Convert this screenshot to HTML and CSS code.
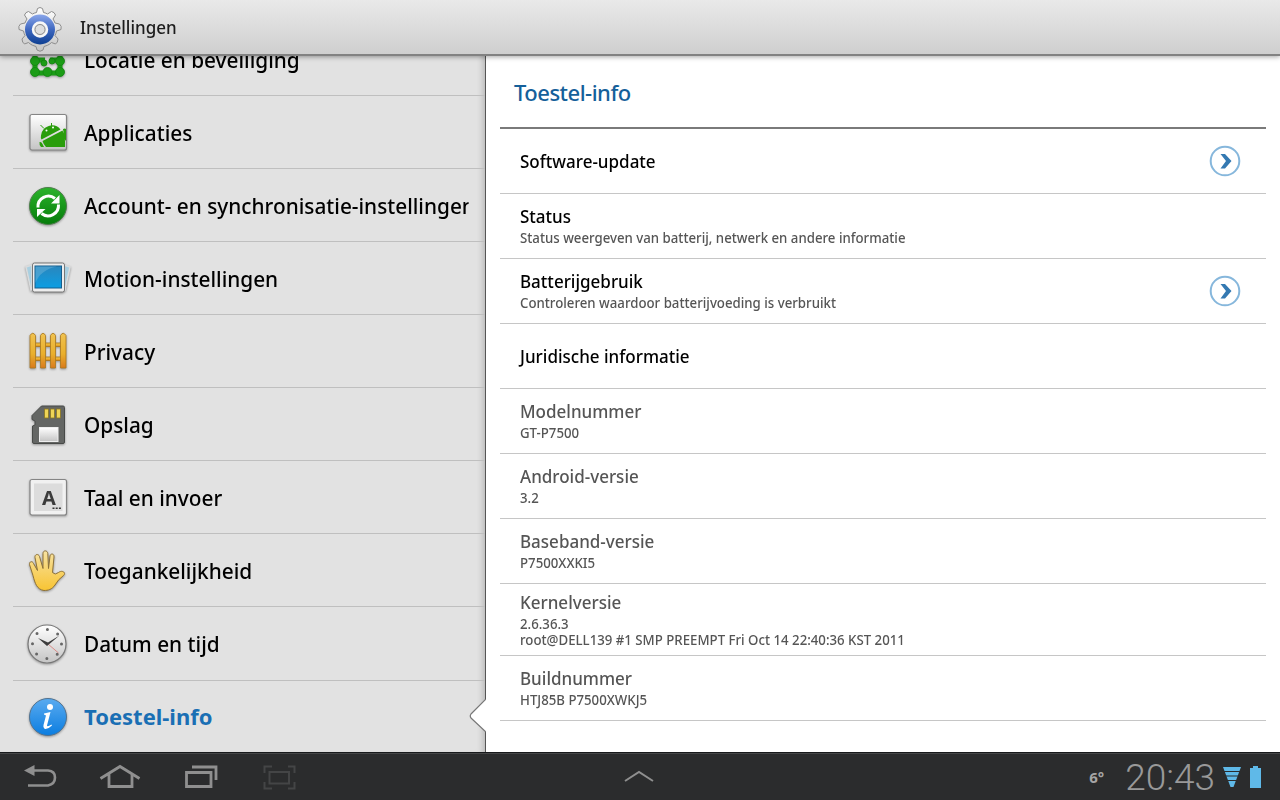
FILE: index.html
```html
<!DOCTYPE html>
<html lang="nl">
<head>
  <meta charset="utf-8">
  <title>Instellingen</title>
  <link rel="stylesheet" href="styles.css">
</head>
<body>
  <header class="topbar">
    <svg class="gear" width="48" height="48" viewBox="0 0 48 48">
      <defs>
        <linearGradient id="blue" x1="0" y1="0" x2="0" y2="1"><stop offset="0" stop-color="#8aa6ea"/><stop offset=".5" stop-color="#3f68c0"/><stop offset="1" stop-color="#0d3f92"/></linearGradient>
        <linearGradient id="silver" x1="0" y1="0" x2="0" y2="1"><stop offset="0" stop-color="#fff"/><stop offset="1" stop-color="#c4c4c4"/></linearGradient>
      </defs>
      <g fill="url(#silver)" stroke="#8d8d8d" stroke-width="1">
        <path d="M20.500 7.500 21.500 3.500Q24 1.500 26.500 3.500L27.500 7.500Q30 8 31.500 9L35.500 6.500Q38.500 7 39.500 10L37 14Q38.300 16 39 18L43.500 19Q46 21 45 24.500L40.500 26Q40 28.500 39 30.500L42 34Q42 37.500 39.500 39L35.500 37.500Q33.500 39.500 31.500 40.300L28 41.500 27 45Q24 47.500 21 45L20 41.500 16.500 40.300Q14.500 39.500 12.500 37.500L8.500 39Q6 37.500 6 34L9 30.500Q8 28.500 7.500 26L3 24.500Q2 21 4.500 19L9 18Q9.700 16 11 14L8.500 10Q9.500 7 12.500 6.500L16.500 9Q18 8 20.500 7.500Z"/>
      </g>
      <circle cx="24" cy="24.500" r="15" fill="url(#blue)"/>
      <circle cx="24" cy="24.500" r="7" fill="#d4d6da" stroke="#f7f7f7" stroke-width="2.500"/>
      <circle cx="24" cy="24.500" r="5" fill="#dedede" stroke="#8f8f8f"/>
    </svg>
    <span class="app-title">Instellingen</span>
  </header>

  <main>
    <nav class="side">
      <ul>
        <li>
          <svg class="icon" viewBox="0 0 48 48">
            <g fill="none" stroke="#1c9c17" stroke-width="5">
              <path d="M11 10v28M36 10v28M11 37h25M11 24h10M26 24h10"/>
            </g>
            <g fill="#1c9c17" stroke="#128510" stroke-width=".8">
              <circle cx="11" cy="25" r="4.500"/><circle cx="20" cy="27" r="3"/><circle cx="28" cy="25" r="3"/><circle cx="36" cy="25" r="4.500"/>
              <circle cx="11" cy="36" r="4.500"/><circle cx="23.500" cy="36" r="4.500"/><circle cx="36" cy="36" r="4.500"/>
            </g>
          </svg>
          <span class="label">Locatie en beveiliging</span>
        </li>
        <li>
          <svg class="icon" viewBox="0 0 48 48">
            <rect x="6" y="5.500" width="36.500" height="35.500" rx="2" fill="url(#silver)" stroke="#858585" stroke-width="1.200"/>
            <path d="M17 27.500A11 11 0 0 1 36.500 21.500L17.500 31.500Q16.500 29.500 17 27.500ZM18.500 33 38.500 22.500Q41 27 41 33V39H22Q19.500 36.500 18.500 33ZM15.500 34Q17.500 33.500 18.500 36L20 39H17Q15 36.500 15.500 34ZM39 21Q41 20 42 21V33Q40 31 40 28Z" transform="translate(0 -1)" fill="#2a9d0c"/>
            <path d="M16.500 16 20 19.500M27.500 14V17" stroke="#2a9d0c"/>
            <circle cx="22.500" cy="21.500" r="1" fill="#fff"/><circle cx="29" cy="18.500" r="1" fill="#fff"/>
          </svg>
          <span class="label">Applicaties</span>
        </li>
        <li>
          <svg class="icon" viewBox="0 0 48 48">
            <defs><linearGradient id="green" x1="0" y1="0" x2="0" y2="1"><stop offset="0" stop-color="#2bb32b"/><stop offset="1" stop-color="#067c0b"/></linearGradient></defs>
            <circle cx="24" cy="24" r="18.500" fill="url(#green)" stroke="#4c7d4a"/>
            <g fill="none" stroke="#fff" stroke-width="3">
              <path d="M14 25.500A10.500 10.500 0 0 1 31 16.500M34.500 22.500A10.500 10.500 0 0 1 17.500 31.500"/>
            </g>
            <path d="M35.500 13V21.500H27ZM13 35V27H21.500Z" fill="#fff"/>
          </svg>
          <span class="label">Account- en synchronisatie-instellingen</span>
        </li>
        <li>
          <svg class="icon" viewBox="0 0 48 48">
            <defs><linearGradient id="sky" x1="0" y1="0" x2="0" y2="1"><stop offset="0" stop-color="#2a86bd"/><stop offset="1" stop-color="#0c9ee3"/></linearGradient></defs>
            <g fill="#a9cfe0" stroke="#d9dbdc" stroke-width="1.500">
              <path d="M2 12 8 10V34L7 35ZM46 12 40 10V34L41 35Z"/>
            </g>
            <rect x="8.500" y="8" width="32" height="29" rx="2" fill="#ededed" stroke="#777"/>
            <rect x="11" y="11" width="26.500" height="22" fill="url(#sky)" stroke="#155f8d"/>
            <path d="M11.500 28Q16 15 33 11.500H11.500Z" fill="#62aed6" opacity=".6"/>
          </svg>
          <span class="label">Motion-instellingen</span>
        </li>
        <li>
          <svg class="icon" viewBox="0 0 48 48">
            <defs><linearGradient id="wood" x1="0" y1="0" x2="0" y2="1"><stop offset="0" stop-color="#f0c250"/><stop offset=".6" stop-color="#e9af2c"/><stop offset="1" stop-color="#d97a1c"/></linearGradient></defs>
            <g fill="url(#wood)" stroke="#a9771d" stroke-width=".8" transform="translate(0 -1)">
              <rect x="8" y="16" width="33" height="3.500"/><rect x="8" y="30" width="33" height="3.500"/>
              <path d="M6 41V8.500Q8.800 4 11.500 8.500V41ZM16.500 41V8.500Q19 4 21.500 8.500V41ZM26.500 41V8.500Q29 4 31.500 8.500V41ZM36.500 41V8.500Q39 4 42 8.500V41Z"/>
            </g>
          </svg>
          <span class="label">Privacy</span>
        </li>
        <li>
          <svg class="icon" viewBox="0 0 48 48">
            <path d="M17.500 5H39Q40.500 5 40.500 6.500V41Q40.500 42.500 39 42.500H10Q8.500 42.500 8.500 41V25L11 24V20L8 18.500V14.500Z" fill="#646664" stroke="#484a48"/>
            <g fill="#efd456" stroke="#8b7622" stroke-width=".8"><rect x="20.500" y="8" width="4" height="9"/><rect x="26.500" y="8" width="4" height="9"/><rect x="32.500" y="8" width="4" height="9"/></g>
            <rect x="15.500" y="26.500" width="18.500" height="14" fill="url(#silver)" stroke="#eee"/>
          </svg>
          <span class="label">Opslag</span>
        </li>
        <li>
          <svg class="icon" viewBox="0 0 48 48">
            <rect x="6" y="5.500" width="36.500" height="35.500" rx="2" fill="#f1f1f1" stroke="#858585" stroke-width="1.200"/>
            <rect x="10" y="9.500" width="28.500" height="27.500" fill="#dcdcdc"/>
            <text class="key" x="25" y="31" text-anchor="middle">A</text>
            <path d="M28.500 34.200h8.500" stroke="#333" stroke-width="1.500" stroke-dasharray="2 1.200"/>
          </svg>
          <span class="label">Taal en invoer</span>
        </li>
        <li>
          <svg class="icon" viewBox="0 0 48 48">
            <defs><linearGradient id="skin" x1="0" y1="0" x2="0" y2="1"><stop offset="0" stop-color="#f7e2a2"/><stop offset="1" stop-color="#f8c433"/></linearGradient></defs>
            <path d="M9 29 5.500 18C5 15 8.500 14 9.500 17L13.500 24 11 11C10.500 7.500 14.500 7 15.500 10L19 22V7C19 3.500 23.500 3.500 23.800 7L24.500 22 26 9.500C26.500 6.500 30.500 7 30 10.500L28.500 26Q31 29 34.500 26C38.500 23 42.500 26.500 39.500 29Q34 33 31 38.500C28 43 24 44 20 44C13 43 11 37 9 29Z" transform="translate(0 -.5)" fill="url(#skin)" stroke="#8d7137"/>
          </svg>
          <span class="label">Toegankelijkheid</span>
        </li>
        <li>
          <svg class="icon" viewBox="0 0 48 48">
            <circle cx="23" cy="24" r="19" fill="url(#silver)" stroke="#777" stroke-width="1.200"/>
            <circle cx="23" cy="24" r="14.500" fill="none" stroke="#666" stroke-width="3" stroke-linecap="round" stroke-dasharray="0 11.388"/>
            <path d="M24 24 34.500 33" stroke="#d98a86"/>
            <path d="M23 26 14 18 24 22.500 35.500 15.500Z" fill="#3c3c3c"/>
          </svg>
          <span class="label">Datum en tijd</span>
        </li>
        <li class="active">
          <svg class="icon" viewBox="0 0 48 48">
            <defs><linearGradient id="info" x1="0" y1="0" x2="0" y2="1"><stop offset="0" stop-color="#5aabf0"/><stop offset="1" stop-color="#0b7de0"/></linearGradient></defs>
            <circle cx="24" cy="24" r="18.500" fill="url(#info)" stroke="#51728f"/>
            <circle cx="26" cy="14" r="3" fill="#fff"/>
            <path d="M20 20.500 26.500 19 23 32.500Q23 34.500 27.500 31.500L28 32.500Q24 36.500 20.500 35.800Q18.800 35 19.500 32L22 22.500 20 21.500Z" fill="#fff"/>
          </svg>
          <span class="label">Toestel-info</span>
        </li>
      </ul>
      <svg class="pointer" width="17" height="34" viewBox="0 0 17 34"><path d="M17 0 2 15Q.500 17 2 19L17 33" fill="#fff" stroke="#777" stroke-width="1.200"/></svg>
    </nav>

    <section class="detail">
      <h1>Toestel-info</h1>
      <div class="row">
        <div><b>Software-update</b></div>
        <svg class="go" width="32" height="32" viewBox="0 0 32 32"><circle cx="16" cy="16" r="14.300"/><path d="M11.500 9h4.500l6.500 7-6.500 7.500h-4.500l5.500-7.500z"/></svg>
      </div>
      <div class="row">
        <div><b>Status</b><small>Status weergeven van batterij, netwerk en andere informatie</small></div>
      </div>
      <div class="row">
        <div><b>Batterijgebruik</b><small>Controleren waardoor batterijvoeding is verbruikt</small></div>
        <svg class="go" width="32" height="32" viewBox="0 0 32 32"><circle cx="16" cy="16" r="14.300"/><path d="M11.500 9h4.500l6.500 7-6.500 7.500h-4.500l5.500-7.500z"/></svg>
      </div>
      <div class="row">
        <div><b>Juridische informatie</b></div>
      </div>
      <div class="row off">
        <div><b>Modelnummer</b><small>GT-P7500</small></div>
      </div>
      <div class="row off">
        <div><b>Android-versie</b><small>3.2</small></div>
      </div>
      <div class="row off">
        <div><b>Baseband-versie</b><small>P7500XXKI5</small></div>
      </div>
      <div class="row off kernel">
        <div><b>Kernelversie</b><small>2.6.36.3<br>root@DELL139 #1 SMP PREEMPT Fri Oct 14 22:40:36 KST 2011</small></div>
      </div>
      <div class="row off">
        <div><b>Buildnummer</b><small>HTJ85B P7500XWKJ5</small></div>
      </div>
    </section>
  </main>

  <footer class="sysbar">
    <div class="nav">
      <svg width="80" height="46" viewBox="0 0 80 46"><path d="M32 15.500H48Q55 16 55 22.500T48 30.500H28" fill="none" stroke="#8f8f8f" stroke-width="2.600"/><path d="M24 15.500 34.500 10V21Z" fill="#8f8f8f"/></svg>
      <svg width="80" height="46" viewBox="0 0 80 46"><path d="M20.500 23.500 40 11.500 59.500 23.500M29 19V31.500H52V19" fill="none" stroke="#8f8f8f" stroke-width="2.800"/></svg>
      <svg width="80" height="46" viewBox="0 0 80 46"><path d="M26.500 17.500H51V31.500H26.500ZM32 12H56V25" fill="none" stroke="#8f8f8f" stroke-width="2.800"/></svg>
      <svg width="80" height="46" viewBox="0 0 80 46"><path d="M24.500 18V11.500H32M48 11.500H54.500V18M54.500 27V33.500H48M32 33.500H24.500V27M29.500 17H49V28.500H29.500Z" fill="none" stroke="#444546" stroke-width="2"/></svg>
    </div>
    <svg class="up" width="30" height="14" viewBox="0 0 30 14"><path d="M1 12 15 3 29 12" fill="none" stroke="#8f8f8f" stroke-width="2"/></svg>
    <div class="status">
      <span class="temp">6°</span>
      <span class="clock">20:43</span>
      <svg width="18" height="22" viewBox="0 0 18 22"><path d="M0 1H18L10.500 21H7.500Z" fill="#5fb9e8"/><path d="M0 5.500H18M0 10H18M0 14.500H18" stroke="#2b2c2d" stroke-width="1"/></svg>
      <svg width="11" height="22" viewBox="0 0 11 22"><path d="M0 2H3V0H8V2H11V22H0Z" fill="#5fb9e8"/></svg>
    </div>
  </footer>
</body>
</html>
```
FILE: styles.css
```css
* {
  box-sizing: border-box;
}

body {
  margin: 0;
  width: 1280px;
  height: 800px;
  overflow: hidden;
  display: flex;
  flex-direction: column;
  font-family: "Noto Sans", "Open Sans", sans-serif;
  font-weight: 500;
  color: #000;
}

/* slightly condensed text */
.app-title,
.label,
.detail h1 span,
.row b,
.row small {
  transform: scaleX(0.945);
  transform-origin: 0 50%;
}

/* top bar */
.topbar {
  position: relative;
  z-index: 2;
  height: 56px;
  flex: none;
  display: flex;
  align-items: center;
  padding-left: 16px;
  background: linear-gradient(#e9e9e9, #cfcfcf);
  border-bottom: 2px solid #828282;
  box-shadow: 0 1px 5px rgba(0, 0, 0, 0.35);
}

.gear {
  margin-top: 3px;
}

.app-title {
  margin-left: 16px;
  font-size: 18px;
  color: #1c1c1c;
}

main {
  display: flex;
  flex: 1;
  min-height: 0;
}

/* left menu */
.side {
  position: relative;
  width: 486px;
  flex: none;
  padding-left: 13px;
  background: #e2e2e2;
  border-right: 1px solid #555;
  box-shadow: inset -6px 0 6px -4px rgba(0, 0, 0, 0.2);
}

.side ul {
  list-style: none;
  margin: 0;
  padding: 0;
  height: 696px;
  display: flex;
  flex-direction: column;
  justify-content: flex-end;
  overflow: hidden;
}

.side li {
  height: 73.100px;
  flex: none;
  display: flex;
  align-items: center;
  padding: 2px 16px 0 11px;
  border-bottom: 1px solid #bfbfbf;
}

.side li:last-child {
  height: 71.500px;
  border-bottom: 0;
}

.icon {
  width: 48px;
  height: 48px;
  flex: none;
  margin-right: 12px;
  filter: drop-shadow(0 1px 1px rgba(0, 0, 0, 0.35));
}

.key {
  font-size: 20px;
  font-weight: 700;
  fill: #3b3b3b;
}

.label {
  flex: none;
  width: 407px;
  margin-bottom: 2px;
  font-size: 22px;
  line-height: 40px;
  white-space: nowrap;
  overflow: hidden;
}

.active .label {
  font-weight: 700;
  color: #1a6fb4;
  transform: none;
}

.pointer {
  position: absolute;
  right: -1px;
  bottom: 19px;
}

/* right pane */
.detail {
  flex: 1;
  padding: 0 14px;
  background: #fff;
}

.detail h1 {
  height: 73px;
  margin: 0;
  padding-left: 14px;
  font-size: 22px;
  font-weight: 500;
  letter-spacing: -0.5px;
  line-height: 73px;
  color: #15609a;
  border-bottom: 2px solid #7a7a7a;
}

.row {
  height: 65px;
  display: flex;
  justify-content: space-between;
  align-items: center;
  padding: 0 25px 0 20px;
  border-bottom: 1px solid #c6c6c6;
}

.row b {
  display: block;
  font-size: 18px;
  font-weight: 500;
  line-height: 24px;
}

.row small {
  display: block;
  font-size: 14px;
  line-height: 16px;
  white-space: nowrap;
  color: #555;
}

.row b:not(:last-child) {
  position: relative;
  top: -2px;
}

.off b {
  color: #555;
}

.kernel {
  height: 72px;
}

.go {
  margin-bottom: 1px;
}

.go circle {
  fill: none;
  stroke: #86b7dc;
  stroke-width: 2;
}

.go path {
  fill: #3479b2;
}

/* system bar */
.sysbar {
  position: relative;
  height: 48px;
  flex: none;
  display: flex;
  justify-content: space-between;
  align-items: center;
  padding-right: 19px;
  background: #2b2c2d;
  border-top: 1px solid #17191b;
  box-shadow: inset 0 1px #454647;
}

.nav {
  display: flex;
  padding-top: 2px;
}

.up {
  position: absolute;
  left: 624px;
  top: 16px;
}

.status {
  display: flex;
  align-items: center;
}

.temp {
  margin-right: 21px;
  font-size: 15px;
  font-weight: 700;
  color: #a5a5a5;
}

.clock {
  margin-right: 8px;
  font-family: Roboto, Inter, sans-serif;
  font-size: 37px;
  font-weight: 300;
  font-stretch: 90%;
  color: #999;
  padding-top: 2px;
}

.status svg + svg {
  margin-left: 9px;
}
```
